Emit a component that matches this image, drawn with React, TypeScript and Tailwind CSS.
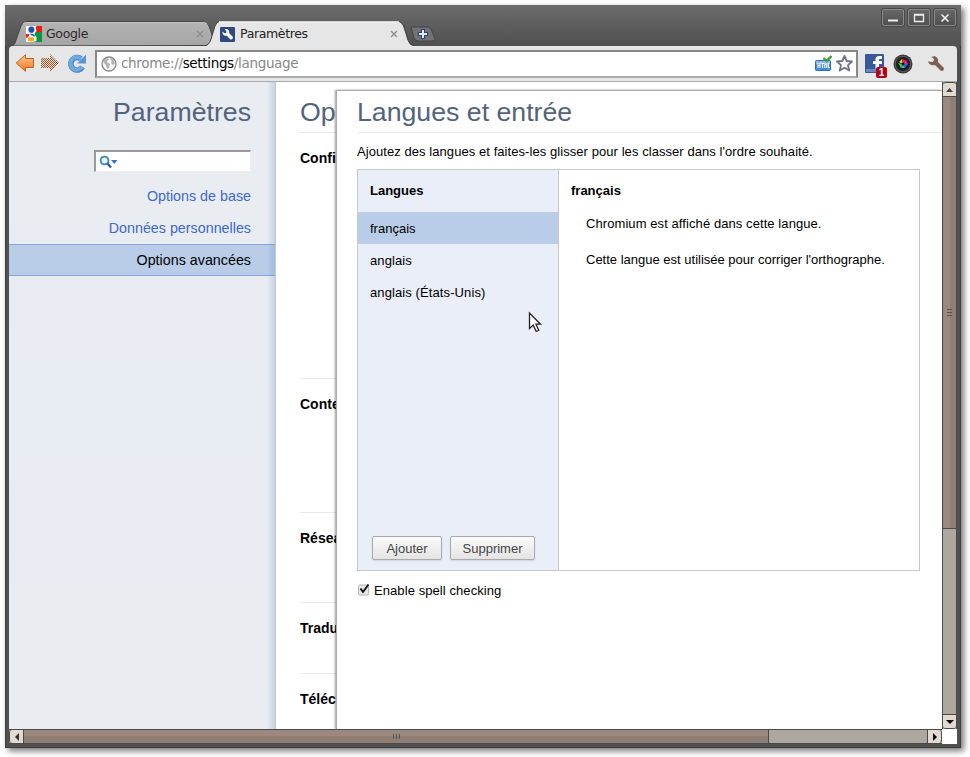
import React from "react";

const WinButton = ({ children }: { children: React.ReactNode }) => (
  <div className="flex h-[17px] w-[22px] items-center justify-center rounded-[2px] border border-[#8a8a8a] bg-gradient-to-b from-[#666] to-[#505050] shadow-[0_0_0_1px_#484848]">
    <svg width="14" height="12" viewBox="0 0 14 12" fill="none">{children}</svg>
  </div>
);

const WrenchTile = () => (
  <svg width="15" height="15" viewBox="0 0 15 15" className="shrink-0">
    <rect width="15" height="15" rx="1" fill="#2f4a80" />
    <path d="M2.500 4.500 4.500 6.300l1.600-.3.300-1.800L4.800 2.300C7.500 1.500 9.700 3.500 9.200 6l3.500 3.800c1 1.500-1 3.700-2.500 2.400L6.800 8.700C4.300 9.300 2 7.500 2.500 4.500Z" fill="#fff" />
  </svg>
);

const GoogleIcon = () => (
  <svg width="16" height="16" viewBox="0 0 16 16" className="shrink-0">
    <path d="M0 0h9v16H0z" fill="#fff" />
    <path d="M9 0h7v6H9z" fill="#ed1c12" />
    <path d="M9 6h7v10H6z" fill="#0a963c" />
    <path d="M0 8h3.500l-1 3L0 12z" fill="#ed1c12" />
    <path d="M3 0h8l-1.500 1 1 4-2.500 3 2.500 3v4l-4 1-4-1-1-3 2.500-3.500L1 6V2z" fill="#fff" />
    <ellipse cx="5.400" cy="3.700" rx="3" ry="3.100" fill="#1557b8" />
    <path d="M4.500 8.300q3 .2 4 2" fill="none" stroke="#1557b8" strokeWidth="1.500" />
    <ellipse cx="5" cy="13.300" rx="3.200" ry="2.200" fill="#f5a91b" />
  </svg>
);

const CloseX = () => (
  <svg width="8" height="8" viewBox="0 0 8 8" className="shrink-0">
    <path d="M1 1l6 6M7 1 1 7" stroke="#8e8e8e" strokeWidth="1.400" />
  </svg>
);

const Tab = ({ active, icon, label }: { active?: boolean; icon: React.ReactNode; label: string }) => (
  <div className={active ? "relative z-10 -ml-[11px] h-[25px] w-[208px]" : "relative h-[25px] w-[206px]"}>
    <svg className="absolute inset-0" width="208" height="25" viewBox="0 0 208 25">
      <defs>
        <linearGradient id="inactiveTab" x1="0" y1="0" x2="0" y2="1">
          <stop stopColor="#b4b4b4" />
          <stop offset="1" stopColor="#a5a5a5" />
        </linearGradient>
      </defs>
      {active ? (
        <>
          <path d="M0 25C3 24 4 22 5 19L9 5Q11 .5 14 .5H192Q195 .5 197 5L202 20Q204 25 208 25Z" fill="#e6e6e6" />
          <path d="M0 24.500C3 23 4 21 5 18L9 5Q11 .5 13 .5M193 .5Q196 1 198 5L202 19Q204 24 208 24.500" fill="none" stroke="#454545" />
          <path d="M13 1H193" stroke="#fff" />
        </>
      ) : (
        <>
          <path d="M0 25C4 24 4 22 5 19L10 5Q12 .5 15 .5H192Q196 .5 198 5L203 20 204 24.500Z" fill="url(#inactiveTab)" stroke="#454545" />
          <path d="M12 3Q13 1.500 16 1.500H192Q195 1.500 196 3" fill="none" stroke="#c4c4c4" />
        </>
      )}
    </svg>
    <div className={active ? "relative flex h-[26px] items-center pl-[14px] pr-[16px]" : "relative flex h-[26px] items-center pl-[15px] pr-[13px]"}>
      {icon}
      <span className={active ? "ml-[5px] flex-1 text-[12.500px] tracking-[-0.35px] text-[#222]" : "ml-[4px] flex-1 text-[12.500px] tracking-[-0.35px] text-[#302828]"}>{label}</span>
      <CloseX />
    </div>
  </div>
);

const TitleBar = () => (
  <div className="flex h-[41px] justify-between bg-gradient-to-b from-[#6c6c6c] to-[#505050] pl-[6px] pr-[5px]">
    <div className="flex items-end font-['DejaVu_Sans',sans-serif]">
      <Tab icon={<GoogleIcon />} label="Google" />
      <Tab active icon={<WrenchTile />} label="Paramètres" />
      <svg width="27" height="16" viewBox="0 0 27 16" className="mb-[4px] -ml-[5px]">
        <path d="M2 1h17q2 0 3 2l4 10q0 2-2 2H9q-3 0-4-3Z" fill="#727272" stroke="#454545" />
        <path d="M14 3v10M9 8h10" stroke="#26447c" strokeWidth="4" />
        <path d="M14 4v8M10 8h8" stroke="#e8e8e8" strokeWidth="2" />
      </svg>
    </div>
    <div className="flex gap-[4px] pt-[4px]">
      <WinButton><path d="M2 8.500h10" stroke="#eee" strokeWidth="2" /></WinButton>
      <WinButton><path d="M2.500 2.500h9v7h-9zM2 3h10" stroke="#eee" strokeWidth="1.300" /></WinButton>
      <WinButton><path d="m3.500 2.500 7 7m0-7-7 7" stroke="#f4f4f4" strokeWidth="1.600" /></WinButton>
    </div>
  </div>
);

const Arrow = ({ forward }: { forward?: boolean }) => (
  <svg width="20" height="20" viewBox="0 0 20 20" className="shrink-0">
    <defs>
      <linearGradient id="orange" x1="0" y1="0" x2="0" y2="1">
        <stop stopColor="#ffc58c" /><stop offset="1" stopColor="#f07820" />
      </linearGradient>
      <pattern id="dots" width="2" height="2" patternUnits="userSpaceOnUse">
        <rect width="2" height="2" fill="#e9dfd6" />
        <path d="M0 0h1v1H0zM1 1h1v1H1z" fill="#96592f" />
      </pattern>
    </defs>
    {forward
      ? <path d="M1 4h9V0l9 9-9 9v-4H1Z" fill="url(#dots)" />
      : <path d="M18.500 4.500h-8V.7L1.200 9l9.300 8.300v-3.800h8Z" fill="url(#orange)" stroke="#c4601c" />}
  </svg>
);

const Toolbar = () => (
  <div className="mx-[4px] flex h-[36px] items-center rounded-t-[4px] border-b border-[#a9a9a9] bg-[#e6e6e6] pl-[6px] pr-[12px]">
    <Arrow />
    <div className="ml-[5px]"><Arrow forward /></div>
    <svg width="20" height="20" viewBox="0 0 20 20" className="ml-[7px] shrink-0">
      <path d="M15.500 13A6.300 6.300 0 1 1 14 4.800" fill="none" stroke="#4a86c4" strokeWidth="5.600" />
      <path d="M19 .5V9.500h-9Z" fill="#5b95d0" />
      <path d="M15 13A6.300 6.300 0 1 1 14 4.800" fill="none" stroke="#72a9df" strokeWidth="3.800" />
    </svg>
    <div className="ml-[8px] flex h-[28px] w-[763px] items-center border-2 border-[#888] border-b-[#aaa] bg-white pl-[4px] pr-[3px]">
      <svg width="16" height="16" viewBox="0 0 16 16" className="shrink-0">
        <circle cx="8" cy="8" r="7" fill="#fafafa" stroke="#888" strokeWidth="1.300" />
        <path d="M3 3l4-1 1 2-2 1 1 2 2 1-1 4-2 1-1-4-3-3ZM10 2l3 2 1 4-2 1-2-2 1-2-2-1Z" fill="#b2b2b2" />
      </svg>
      <span className="ml-[4px] flex-1 whitespace-nowrap font-['DejaVu_Sans',sans-serif] text-[13.500px] tracking-[-0.33px] text-[#888]">
        chrome://<span className="text-black">settings</span>/language
      </span>
      <div className="relative mr-[4px] h-[17px] w-[17px]">
        <svg width="17" height="17" viewBox="0 0 17 17">
          <rect x=".5" y="5.500" width="15" height="10" rx="1" fill="#4c90d4" stroke="#2d6cb4" />
          <path d="M1 6h14v3H1z" fill="#8cbcec" />
          <path d="M3 8v5M5 8v5M3 10.500h2M6.300 8.500H9M7.600 8v5M9.800 13V8.500l1 1.500 1-1.500V13M13.300 8v4.500H15" fill="none" stroke="#fff" />
          <path d="m8.500 3 3 3 5-5" fill="none" stroke="#35a035" strokeWidth="2.300" />
        </svg>
      </div>
      <svg width="17" height="17" viewBox="0 0 17 17">
        <path d="m8.500 1 2.200 5 5.300.5-4 3.600 1.200 5.400-4.700-2.800-4.700 2.800L5 10.100 1 6.500 6.300 6Z" fill="#fff" stroke="#6c7488" strokeWidth="1.900" strokeLinejoin="round" />
      </svg>
    </div>
    <div className="relative ml-[7px] h-[19px] w-[19px]">
      <svg width="19" height="19" viewBox="0 0 19 19">
        <rect width="19" height="19" rx="1" fill="#39589b" />
        <path d="M1 15h17v3H1z" fill="#6d86bb" />
        <path d="M17 2h-3q-3.500 0-3.500 3.500V7H8v3h2.500v5H14v-5h3V7h-3V5.500Q14 5 15 5h2Z" fill="#fff" />
      </svg>
      <span className="absolute left-[11px] top-[13px] flex h-[11px] w-[11px] items-center justify-center rounded-[2px] bg-[#b60018] font-['Liberation_Sans',sans-serif] text-[10px] font-bold leading-none text-white">1</span>
    </div>
    <svg width="20" height="20" viewBox="0 0 20 20" className="ml-[9px] shrink-0">
      <circle cx="10" cy="10" r="9.500" fill="#3a3a3a" />
      <circle cx="10" cy="10" r="7.700" fill="#222" stroke="#777" strokeWidth=".7" />
      <circle cx="10" cy="10" r="5.200" fill="#111" />
      <path d="M10 10 6 8l3-3Z" fill="#e0d820" /><path d="m10 10-1-5 4 1Z" fill="#f02040" />
      <path d="m10 10 3-4 2 4Z" fill="#e020c0" /><path d="m10 10 5 0-3 4Z" fill="#3060f0" />
      <path d="m10 10 2 4-4 0Z" fill="#18c8e0" /><path d="m10 10-2 4-3-5Z" fill="#28d840" />
      <circle cx="10" cy="10" r="1.500" fill="#111" />
    </svg>
    <svg width="18" height="18" viewBox="0 0 18 18" className="ml-[14px] shrink-0">
      <path d="M1 6.500 5.500 7 7 5.300 6.500 3.500 4.500 2C8.500 0 12 3 11 7l5.500 5.500c1.500 2-1 4.500-3 3L8 10C5 11 1.500 9.500 1 6.500Z" fill="#806050" />
    </svg>
  </div>
);

const Sidebar = () => (
  <div className="relative flex w-[267px] shrink-0 flex-col border-r border-[#c4c9d2] bg-gradient-to-b from-[#e9edf1] via-[#e8ecf3] to-[#e9edf1] text-right text-[14.300px] text-[#3e68c8]">
    <h1 className="mt-[13px] pr-[24px] text-[26.700px] leading-[34px] text-[#53637d]">Paramètres</h1>
    <div className="ml-[85px] mt-[21px] flex h-[22px] w-[157px] items-center border-b border-l-2 border-r border-t-2 border-[#999] border-b-[#eee] border-r-[#eee] bg-white pl-[3px]">
      <svg width="19" height="14" viewBox="0 0 19 14">
        <circle cx="5.500" cy="5.500" r="3.900" fill="#eef6fc" stroke="#3985be" strokeWidth="1.800" />
        <path d="m8.500 8.500 3.500 4" stroke="#2f559c" strokeWidth="2.200" />
        <path d="M12 5h6.500l-3.200 4Z" fill="#3774ba" />
      </svg>
    </div>
    <div className="mt-[8px] h-8 pr-[24px] leading-8">Options de base</div>
    <div className="h-8 pr-[24px] leading-8">Données personnelles</div>
    <div className="h-8 border-y border-[#88a6db] bg-[#b9cde9] pr-[24px] leading-[30px] text-black">Options avancées</div>
    <div className="absolute inset-y-0 right-0 w-2 bg-gradient-to-r from-transparent to-[#5078a038]" />
  </div>
);

const Section = ({ title, size }: { title: string; size: string }) => (
  <div className={size}>
    <div className="border-t border-[#ebebeb] pt-[16px] text-[14px] font-bold leading-[18px]">{title}</div>
  </div>
);

const LanguageRow = ({ selected, name }: { selected?: boolean; name: string }) => (
  <div className={selected ? "h-8 bg-[#b9cde9] pl-3 leading-[33px]" : "h-8 pl-3 leading-[33px] tracking-[0.1px]"}>{name}</div>
);

const Button = ({ label, width }: { label: string; width: string }) => (
  <button className={`${width} h-[24px] rounded-[2px] border border-[#aaa] bg-gradient-to-b from-[#fafafa] to-[#e4e4e4] pt-px text-[13px] leading-[22px] text-[#444] shadow-[0_1px_2px_#0000001c]`}>{label}</button>
);

const LanguagePanel = () => (
  <div className="absolute bottom-0 left-[60px] right-0 top-[8px] border-l border-t border-[#aaa] bg-white pl-[20px] text-[13px] shadow-[-1px_0_2px_#00000066]">
    <h2 className="h-[42px] border-b border-[#ebebeb] pt-[4px] text-[26.700px] leading-[34px] text-[#53637d]">Langues et entrée</h2>
    <p className="h-[36px] leading-[38px] tracking-[0.065px]">Ajoutez des langues et faites-les glisser pour les classer dans l'ordre souhaité.</p>
    <div className="flex h-[402px] w-[563px] border border-[#c8c8c8]">
      <div className="flex w-[201px] flex-col border-r border-[#c8c8c8] bg-[#e9eef9]">
        <div className="h-[42px] pl-3 font-bold leading-[42px]">Langues</div>
        <LanguageRow selected name="français" />
        <LanguageRow name="anglais" />
        <LanguageRow name="anglais (États-Unis)" />
        <div className="mt-auto flex gap-[8px] pb-[10px] pl-[14px]">
          <Button label="Ajouter" width="w-[70px]" />
          <Button label="Supprimer" width="w-[85px]" />
        </div>
      </div>
      <div className="flex-1 pl-[12px]">
        <div className="h-[42px] font-bold leading-[42px]">français</div>
        <div className="h-[36px] pl-[15px] leading-[24px] tracking-[0.08px]">Chromium est affiché dans cette langue.</div>
        <div className="pl-[15px] leading-[24px]">Cette langue est utilisée pour corriger l'orthographe.</div>
      </div>
    </div>
    <label className="mt-[10px] flex items-center leading-[20px] tracking-[0.08px]">
      <svg width="13" height="13" viewBox="0 0 13 13" className="mb-[3px] mr-[4px]">
        <rect x="1.500" y="2" width="10" height="10" rx="1.500" fill="#e8e8e8" stroke="#b4b4b4" />
        <path d="m3.500 5.500 2.500 3.500L11.500 1.500" fill="none" stroke="#111" strokeWidth="1.900" />
      </svg>
      Enable spell checking
    </label>
  </div>
);

const Main = () => (
  <div className="relative flex-1 overflow-hidden bg-white">
    <div className="pl-[24px]">
      <h1 className="h-[50px] pt-[13px] text-[26.700px] leading-[34px] text-[#53637d]">Op</h1>
      <Section title="Confi" size="h-[246px]" />
      <Section title="Conte" size="h-[134px]" />
      <Section title="Résea" size="h-[90px]" />
      <Section title="Tradu" size="h-[71px]" />
      <Section title="Téléc" size="h-[56px]" />
    </div>
    <LanguagePanel />
    <svg className="absolute left-[252px] top-[229px]" width="15" height="23" viewBox="0 0 15 23">
      <path d="M1.500 2v15.500l3.700-3.400 3 6.400 2.600-1.200-2.900-6.100h4.600Z" fill="#fff" stroke="#222" strokeWidth="1.300" />
    </svg>
  </div>
);

const VerticalScroll = () => (
  <div className="flex w-[15px] shrink-0 flex-col border-x border-[#4a4a4a] bg-[#aca8a0]">
    <div className="flex h-[15px] items-center justify-center rounded-t-[3px] border-b border-t border-[#4a4a4a] bg-[#e2d9d0]">
      <svg width="7" height="4"><path d="M3.500 0 7 4H0Z" fill="#444" /></svg>
    </div>
    <div className="flex h-[432px] flex-col items-center justify-center gap-[2px] border-b border-[#4a4a4a] bg-[linear-gradient(90deg,#9b897f_50%,#8f7e74_50%)]">
      <div className="h-px w-[5px] bg-[#555]" /><div className="h-px w-[5px] bg-[#555]" /><div className="h-px w-[5px] bg-[#555]" />
    </div>
    <div className="mt-auto flex h-[15px] items-center justify-center rounded-b-[3px] border-y border-[#4a4a4a] bg-[#e2d9d0]">
      <svg width="8" height="4"><path d="M0 0h8L4 4Z" fill="#000" /></svg>
    </div>
  </div>
);

const HorizontalScroll = () => (
  <div className="mx-[4px] h-[15px] bg-white">
    <div className="flex h-[15px] w-[933px] border-y border-[#4a4a4a] bg-[#aca8a0]">
      <div className="flex w-[15px] items-center justify-center rounded-l-[3px] border-x border-[#4a4a4a] bg-[#e2d9d0]">
        <svg width="4" height="8"><path d="M4 0v8L0 4Z" fill="#333" /></svg>
      </div>
      <div className="flex w-[745px] items-center justify-center gap-[2px] border-r border-[#4a4a4a] bg-[linear-gradient(#9b897f_50%,#8f7e74_50%)]">
        <div className="h-[5px] w-px bg-[#555]" /><div className="h-[5px] w-px bg-[#555]" /><div className="h-[5px] w-px bg-[#555]" />
      </div>
      <div className="ml-auto flex w-[15px] items-center justify-center rounded-r-[3px] border-x border-[#4a4a4a] bg-[#e2d9d0]">
        <svg width="4" height="8"><path d="M0 0v8l4-4Z" fill="#000" /></svg>
      </div>
    </div>
  </div>
);

export default function App() {
  return (
    <div className="h-[757px] w-[970px] overflow-hidden bg-white p-[5px] font-['Liberation_Sans',Arial,sans-serif] text-black">
      <div className="h-[743px] w-[956px] bg-[#505050] shadow-[3px_3px_6px_#00000088,inset_0_0_0_1px_#3c3c3c]">
        <TitleBar />
        <Toolbar />
        <div className="mx-[4px] flex h-[647px]">
          <Sidebar />
          <Main />
          <VerticalScroll />
        </div>
        <HorizontalScroll />
      </div>
    </div>
  );
}
